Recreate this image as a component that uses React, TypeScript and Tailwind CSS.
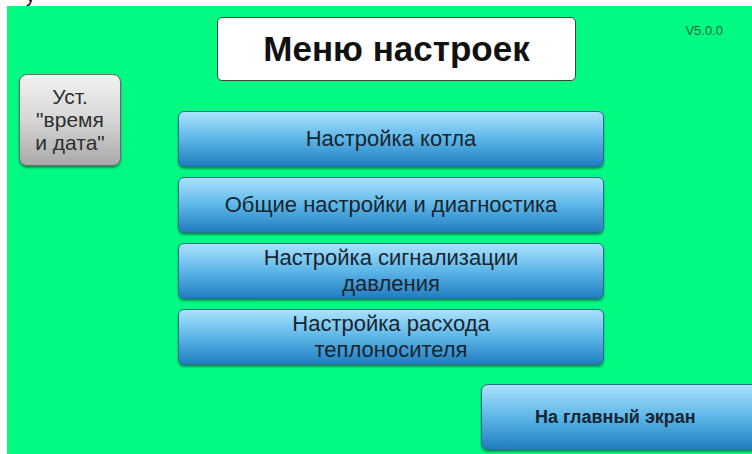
const menuItems: string[][] = [
  ["Настройка котла"],
  ["Общие настройки и диагностика"],
  ["Настройка сигнализации", "давления"],
  ["Настройка расхода", "теплоносителя"],
];

function BlueButton({ lines }: { lines: string[] }) {
  return (
    <button className="h-[56px] w-full rounded-[6px] border border-[#2b6d8f] bg-gradient-to-b from-[#a9e2fc] via-[#5cb6e8] to-[#1f7dbf] shadow-[0_2px_2px_rgba(0,60,40,0.5)] flex flex-col items-center justify-center text-[22px] leading-[26px] text-[#18252f]">
      {lines.map((l) => (
        <span key={l}>{l}</span>
      ))}
    </button>
  );
}

export default function App() {
  return (
    <div className="w-[752px] h-[454px] bg-white overflow-hidden font-['Liberation_Sans',Arial,sans-serif]">
      {/* sliver of the caption line above the panel */}
      <div className="h-[6px] overflow-hidden pl-[26px]">
        <span className="block -mt-[14px] text-[18px] leading-[20px] text-black">у</span>
      </div>
      <div className="ml-[7px] h-[448px] bg-[#02fa82] overflow-hidden flex flex-col">
        <div className="h-[360px] flex">
          {/* left column: date/time button */}
          <div className="w-[171px] pl-[12px] pt-[68px]">
            <button className="w-[102px] h-[92px] rounded-[8px] border border-[#6b6b6b] bg-gradient-to-b from-[#f2f2f2] via-[#d6d6d6] to-[#a9a9a9] shadow-[0_2px_2px_rgba(0,60,40,0.5)] flex flex-col items-center justify-center pb-[2px] text-[21px] leading-[23px] text-[#2e2e2e]">
              <span>Уст.</span>
              <span>"время</span>
              <span>и дата"</span>
            </button>
          </div>
          {/* middle column: title and menu */}
          <div className="w-[426px] flex flex-col">
            <div className="ml-[39px] mt-[11px] w-[359px] h-[64px] rounded-[5px] border border-[#2d4a3a] bg-white flex items-center justify-center text-[35px] font-bold text-[#111]">
              Меню настроек
            </div>
            <div className="mt-[30px] flex flex-col gap-[10px]">
              {menuItems.map((lines) => (
                <BlueButton key={lines[0]} lines={lines} />
              ))}
            </div>
          </div>
          {/* right column: version */}
          <div className="flex-1 flex justify-end pr-[29px] pt-[17px]">
            <span className="text-[13px] leading-[16px] text-[#17683d]">V5.0.0</span>
          </div>
        </div>
        <div className="mt-[18px] flex">
          <button className="ml-[474px] shrink-0 w-[278px] h-[66px] rounded-[7px] border border-[#2b6d8f] bg-gradient-to-b from-[#a9e2fc] via-[#5cb6e8] to-[#1f7dbf] shadow-[0_2px_2px_rgba(0,60,40,0.5)] flex items-center pl-[53px] text-[18px] font-bold text-[#18252f]">
            На главный экран
          </button>
        </div>
      </div>
    </div>
  );
}
